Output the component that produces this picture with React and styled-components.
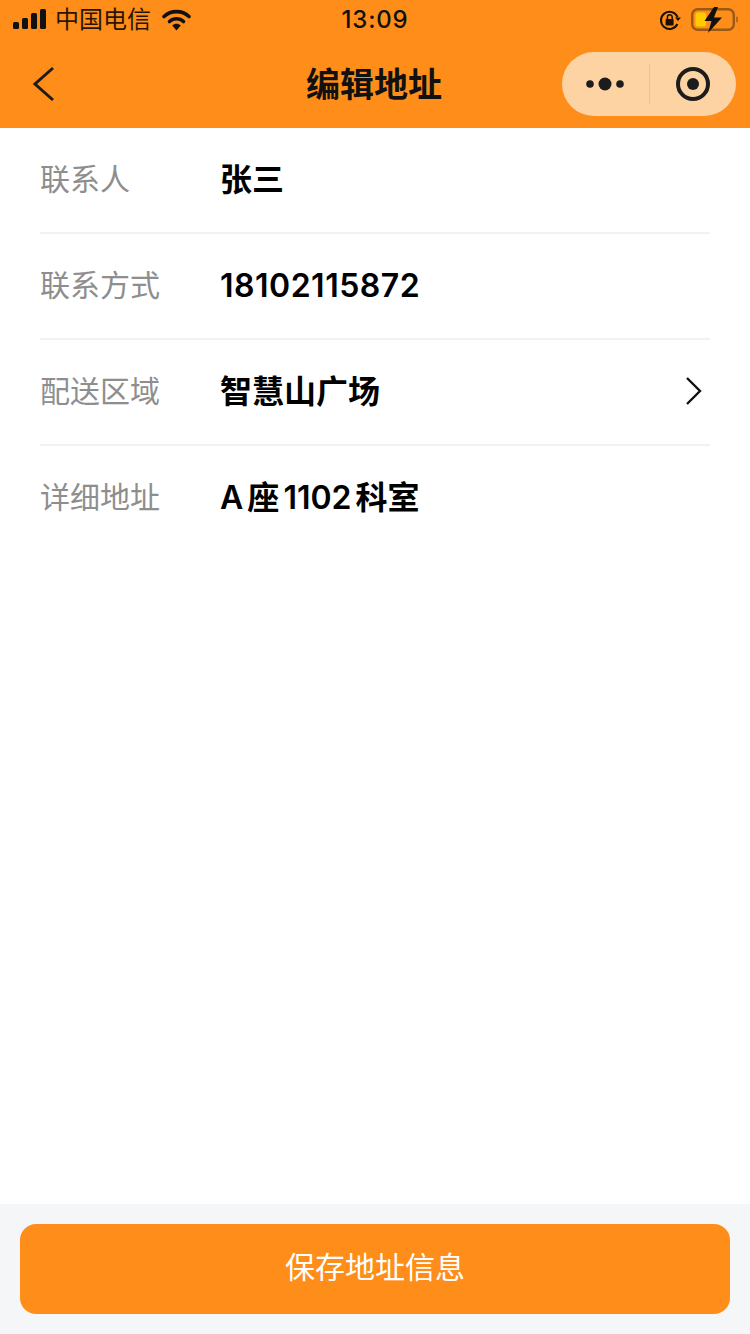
import React from 'react';
import styled, { createGlobalStyle } from 'styled-components';

const ORANGE = '#ff8d1a';
const FONT = 'Inter, "Noto Sans CJK SC", sans-serif';

const GlobalStyle = createGlobalStyle`
    html, body {
        margin: 0;
        padding: 0;
        background: #fff;
        font-family: ${FONT};
    }
`;

const Page = styled.div`
    display: flex;
    flex-direction: column;
    width: 750px;
    height: 1334px;
    overflow: hidden;
`;

const Header = styled.header`
    flex: none;
    height: 128px;
    background: ${ORANGE};
    color: #111;
`;

const StatusBar = styled.div`
    display: grid;
    grid-template-columns: minmax(0, 1fr) auto minmax(0, 1fr);
    align-items: center;
    height: 40px;
    padding: 0 12px;
`;

const StatusLeft = styled.div`
    display: flex;
    align-items: center;
    padding-left: 1px;
`;

const Carrier = styled.span`
    margin: 0 11px 0 9px;
    font-size: 24px;
    line-height: 40px;
    color: #2a1600;
`;

const Clock = styled.span`
    font-size: 24px;
    font-weight: 500;
    line-height: 40px;
    letter-spacing: 0.8px;
`;

const StatusRight = styled.div`
    display: flex;
    align-items: center;
    justify-content: flex-end;
    gap: 10px;
    margin-right: -1px;
`;

const NavBar = styled.div`
    display: grid;
    grid-template-columns: minmax(0, 1fr) auto minmax(0, 1fr);
    align-items: center;
    height: 88px;
    padding: 0 14px;
`;

const BackIcon = styled.svg`
    display: block;
    width: 24px;
    height: 36px;
    margin-left: 19px;
`;

const Title = styled.h1`
    margin: 0 2px 0 0;
    padding-top: 2px;
    font-size: 34px;
    font-weight: 700;
    line-height: 86px;
    color: #111;
`;

const Capsule = styled.div`
    justify-self: end;
    display: flex;
    align-items: center;
    width: 174px;
    height: 64px;
    border-radius: 32px;
    background: #fdd3a3;
`;

const CapsuleHalf = styled.div`
    flex: 1;
    display: flex;
    align-items: center;
    justify-content: center;
`;

const CapsuleDivider = styled.div`
    flex: none;
    width: 1px;
    height: 40px;
    background: #eec193;
`;

const Form = styled.main`
    flex: 1;
    padding: 0 40px;
    background: #fff;
`;

const Row = styled.div`
    display: flex;
    align-items: center;
    box-sizing: border-box;
    height: 106px;
    padding-bottom: 6px;
    border-bottom: 2px solid ${({ $last }) => ($last ? 'transparent' : '#f2f2f2')};
`;

const Label = styled.span`
    flex: none;
    width: 180px;
    font-size: 30px;
    color: #8e8e8e;
`;

const Value = styled.span`
    flex: 1;
    padding-top: ${({ $numeric }) => ($numeric ? '4px' : 0)};
    font-size: 32px;
    font-weight: 600;
    color: #000;
    letter-spacing: ${({ $numeric }) => ($numeric ? '0.5px' : 0)};
    word-spacing: ${({ $wordGap }) => $wordGap || 0};
`;

const Chevron = styled.svg`
    flex: none;
    width: 20px;
    height: 30px;
    margin: 3px 5px 0 0;
`;

const Footer = styled.footer`
    flex: none;
    padding: 20px;
    background: #f5f6f7;
`;

const SaveButton = styled.button`
    display: block;
    width: 100%;
    height: 90px;
    padding: 0 0 9px;
    border: 0;
    border-radius: 16px;
    background: ${ORANGE};
    color: #fff;
    font-family: ${FONT};
    font-size: 30px;
    font-weight: 400;
`;

const SignalIcon = () => (
    <svg width="33" height="22" viewBox="0 0 33 22">
        <g fill="#111">
            <rect x="0" y="13" width="6" height="7" rx="1.5" />
            <rect x="9" y="9" width="6" height="11" rx="1.5" />
            <rect x="18" y="4" width="6" height="16" rx="1.5" />
            <rect x="27" y="0" width="6" height="20" rx="1.5" />
        </g>
    </svg>
);

const WifiIcon = () => (
    <svg width="29" height="22" viewBox="0 0 29 22">
        <path d="M2 7.5C9 1 20 1 27 7.5" fill="none" stroke="#111" strokeWidth="3.6" strokeLinecap="round" />
        <path d="M7.5 12.5C11.5 8.8 17.5 8.8 21.5 12.5" fill="none" stroke="#111" strokeWidth="3.6" strokeLinecap="round" />
        <path d="M10.2 16.4C12.6 14.2 16.4 14.2 18.8 16.4L14.5 21.5Z" fill="#111" />
    </svg>
);

const RotationLockIcon = () => (
    <svg width="22" height="22" viewBox="0 0 22 22">
        <path d="M18.6 8.2A8.6 8.6 0 1 0 18.4 15" fill="none" stroke="#1a1000" strokeWidth="2" />
        <path d="M16 8.5h6l-3 3.6z" fill="#1a1000" />
        <rect x="6.6" y="10" width="8" height="6.4" rx="1" fill="#1a1000" />
        <path d="M8.4 10V8.2a2.4 2.4 0 0 1 4.8 0V10" fill="none" stroke="#1a1000" strokeWidth="1.5" />
    </svg>
);

const BatteryIcon = () => (
    <svg width="48" height="26" viewBox="0 0 48 26">
        <rect x="1.2" y="2.2" width="41.6" height="20.6" rx="5.5" fill="none" stroke="#9a5a14" strokeWidth="2.4" />
        <rect x="4.5" y="5.5" width="10.5" height="14" rx="2.5" fill="#ffcc00" />
        <rect x="45" y="9.5" width="2" height="6" rx="1" fill="#b06a1c" />
        <path d="M23 0 13.5 14h7L17 26 31 10.5h-8L27 0Z" fill="#111" />
    </svg>
);

const MoreIcon = () => (
    <svg width="38" height="16" viewBox="0 0 38 16">
        <g fill="#1c1c1c">
            <circle cx="4" cy="8" r="3.8" />
            <circle cx="19" cy="8" r="6.5" />
            <circle cx="34" cy="8" r="3.8" />
        </g>
    </svg>
);

const TargetIcon = () => (
    <svg width="36" height="36" viewBox="0 0 36 36">
        <circle cx="18" cy="18" r="15" fill="none" stroke="#1c1c1c" strokeWidth="4" />
        <circle cx="18" cy="18" r="6" fill="#1c1c1c" />
    </svg>
);

const fields = [
    { label: '联系人', value: '张三' },
    { label: '联系方式', value: '18102115872', numeric: true },
    { label: '配送区域', value: '智慧山广场', arrow: true },
    { label: '详细地址', value: 'A 座 1102 科室', wordGap: '-4px', last: true },
];

const App = () => (
    <Page>
        <GlobalStyle />
        <Header>
            <StatusBar>
                <StatusLeft>
                    <SignalIcon />
                    <Carrier>中国电信</Carrier>
                    <WifiIcon />
                </StatusLeft>
                <Clock>13:09</Clock>
                <StatusRight>
                    <RotationLockIcon />
                    <BatteryIcon />
                </StatusRight>
            </StatusBar>
            <NavBar>
                <BackIcon viewBox="0 0 24 36">
                    <path d="M20 2 2 18l18 16" fill="none" stroke="#1c1c1c" strokeWidth="3" />
                </BackIcon>
                <Title>编辑地址</Title>
                <Capsule>
                    <CapsuleHalf>
                        <MoreIcon />
                    </CapsuleHalf>
                    <CapsuleDivider />
                    <CapsuleHalf>
                        <TargetIcon />
                    </CapsuleHalf>
                </Capsule>
            </NavBar>
        </Header>
        <Form>
            {fields.map(({ label, value, arrow, last, numeric, wordGap }) => (
                <Row key={label} $last={last}>
                    <Label>{label}</Label>
                    <Value $numeric={numeric} $wordGap={wordGap}>{value}</Value>
                    {arrow && (
                        <Chevron viewBox="0 0 20 30">
                            <path d="M2 2 15 15 2 28" fill="none" stroke="#111" strokeWidth="2.4" />
                        </Chevron>
                    )}
                </Row>
            ))}
        </Form>
        <Footer>
            <SaveButton>保存地址信息</SaveButton>
        </Footer>
    </Page>
);

export default App;
